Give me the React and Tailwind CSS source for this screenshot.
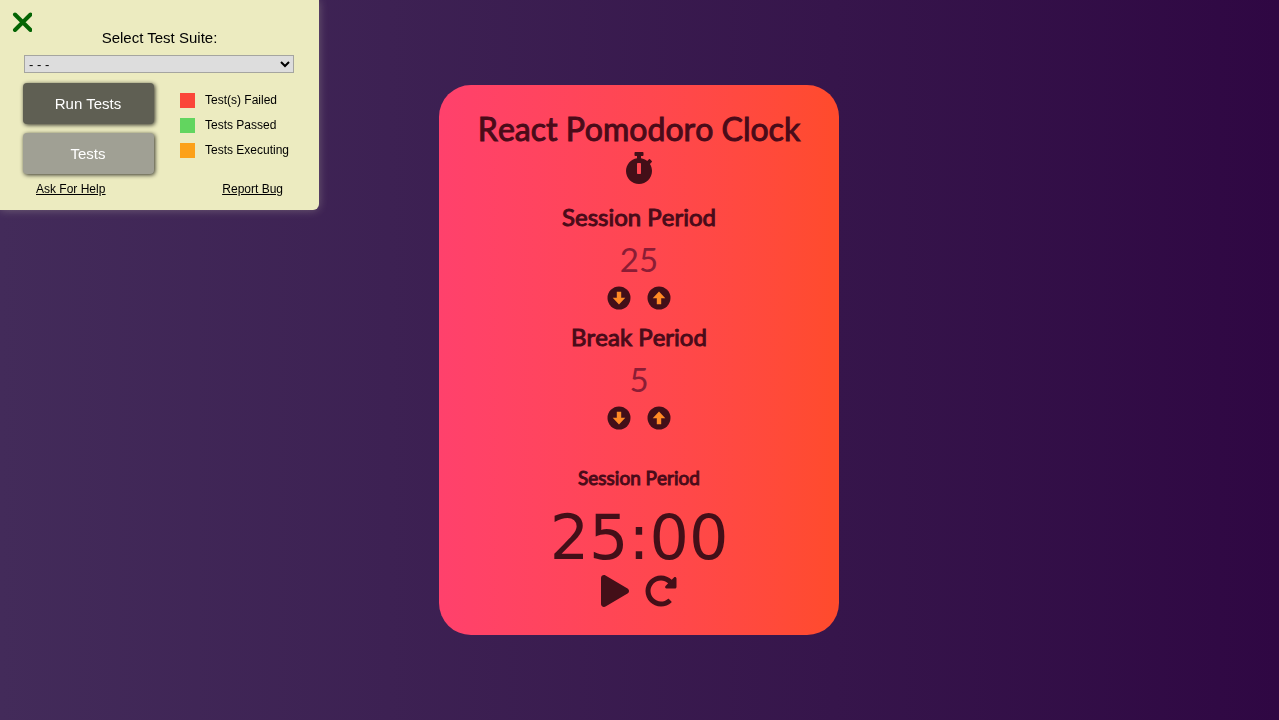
import { FaPlay, FaRedoAlt, FaStopwatch } from "react-icons/fa";

const LEGEND = [
  { label: "Test(s) Failed", swatch: "bg-[#fb4639]" },
  { label: "Tests Passed", swatch: "bg-[#62d55f]" },
  { label: "Tests Executing", swatch: "bg-[#fca119]" },
];

function TestPanel() {
  return (
    <aside className="fixed top-0 left-0 w-[319px] rounded-br-md bg-[#ecebc0] px-6 pt-7 pb-[13px] font-['Liberation_Sans',sans-serif] text-black shadow-[0_0_10px_rgba(236,235,192,0.3)]">
      <button type="button" aria-label="Close panel" className="absolute top-3 left-3">
        <svg viewBox="0 0 20 20" className="size-5" fill="none" stroke="#046404" strokeWidth="4" strokeLinecap="round">
          <path d="M3 2.5 18.5 18M18.5 2.5 3 18" />
        </svg>
      </button>
      <label htmlFor="suite" className="block text-center text-[15px] leading-5">
        Select Test Suite:
      </label>
      <select id="suite" className="mt-[7px] block h-[18px] w-[270px] border border-[#a5a5a0] bg-[#dddddd] text-[13px] leading-4">
        <option>- - -</option>
      </select>
      <div className="mt-[10px] flex">
        <div className="-ml-px flex w-[131px] flex-col gap-[9px]">
          <button type="button" className="h-[41px] rounded bg-[#5f5f53] pt-px pr-px text-[15px] text-white shadow-[1px_1px_4px_rgba(0,0,0,0.8)]">
            Run Tests
          </button>
          <button type="button" className="h-[41px] rounded bg-[#a0a094] pt-px pr-px text-[15px] text-white shadow-[1px_1px_4px_rgba(0,0,0,0.8)]">
            Tests
          </button>
        </div>
        <ul className="ml-[26px] flex flex-col gap-[10px] pt-[10px]">
          {LEGEND.map((item) => (
            <li key={item.label} className="flex h-[15px] gap-[10px] text-[12px] leading-[14px] whitespace-nowrap">
              <span className={`size-[15px] ${item.swatch}`} />
              {item.label}
            </li>
          ))}
        </ul>
      </div>
      <div className="mt-[7px] flex justify-between px-3 text-[12px] leading-4 underline">
        <a href="#help">Ask For Help</a>
        <a href="#bug">Report Bug</a>
      </div>
    </aside>
  );
}

function ArrowIcon({ up }) {
  return (
    <svg viewBox="0 0 24 24" className="size-6">
      <circle cx="12" cy="12" r="11.5" fill="#430f18" />
      <path
        d={up ? "M12 5.5 18.3 12.2H14.2V18.3H9.8V12.2H5.7Z" : "M12 18.5 5.7 11.8H9.8V5.7H14.2V11.8H18.3Z"}
        fill="#ff8a24"
      />
    </svg>
  );
}

function Period({ title, value }) {
  return (
    <section className="flex h-[120px] flex-col items-center">
      <h2 className="text-[24px] leading-[30px] [font-kerning:none] [-webkit-text-stroke:1px_#4a0b19]">{title}</h2>
      <p className="mt-[7px] text-[33px] leading-10 text-[#8b1d35]">{value}</p>
      <div className="mt-[7px] flex gap-4">
        <button type="button" aria-label={`Decrease ${title}`}>
          <ArrowIcon />
        </button>
        <button type="button" aria-label={`Increase ${title}`}>
          <ArrowIcon up />
        </button>
      </div>
    </section>
  );
}

export default function App() {
  return (
    <div className="flex min-h-screen items-center justify-center bg-linear-to-r from-[#432b5a] to-[#2f0743] pr-px font-['Lato',sans-serif] text-[#4a0b19]">
      <TestPanel />
      <main className="flex w-full max-w-[400px] flex-col items-center rounded-[32px] bg-linear-to-r from-[#ff416c] to-[#ff4b2b] pt-6 pb-7">
        <h1 className="text-center text-[32px] leading-10 [font-kerning:none] [-webkit-text-stroke:1px_#4a0b19]">React Pomodoro Clock</h1>
        <FaStopwatch className="mt-[3px] size-8 text-[#430f18]" />
        <div className="mt-[18px]">
          <Period title="Session Period" value="25" />
          <Period title="Break Period" value="5" />
        </div>
        <h3 className="mt-6 text-[19px] leading-6 [font-kerning:none] [-webkit-text-stroke:1px_#4a0b19]">Session Period</h3>
        <p className="mt-4 font-['DejaVu_Sans',sans-serif] text-[62px] leading-[64px] text-[#430f18]">25:00</p>
        <div className="mt-[5px] flex gap-4 text-[#430f18]">
          <button type="button" aria-label="Start">
            <FaPlay className="h-8 w-7" />
          </button>
          <button type="button" aria-label="Reset">
            <FaRedoAlt className="size-8" />
          </button>
        </div>
      </main>
    </div>
  );
}
